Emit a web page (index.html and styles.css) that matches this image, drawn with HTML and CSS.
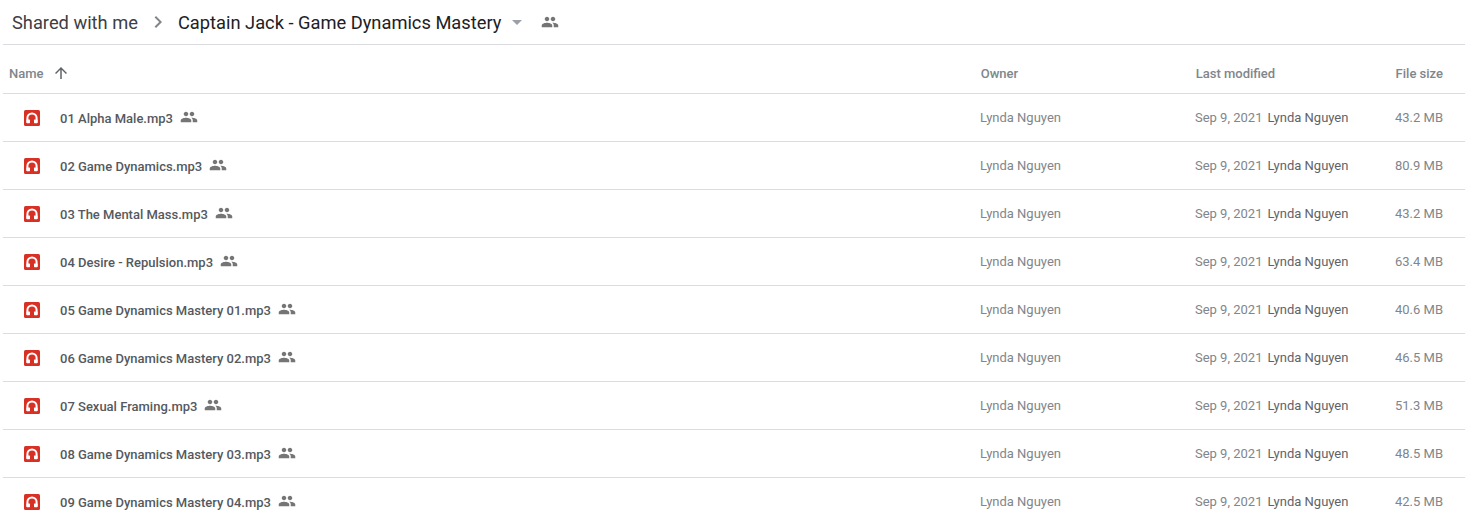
FILE: index.html
```html
<!DOCTYPE html>
<html lang="en">
<head>
  <meta charset="UTF-8" />
  <title>Captain Jack - Game Dynamics Mastery</title>
  <link rel="stylesheet" href="styles.css">
</head>
<body>
  <svg class="defs" width="0" height="0">
    <symbol id="people" viewBox="0 0 24 24">
      <path d="M16 11c1.66 0 2.99-1.34 2.99-3S17.66 5 16 5c-1.66 0-3 1.34-3 3s1.34 3 3 3zm-8 0c1.66 0 2.99-1.34 2.99-3S9.66 5 8 5C6.34 5 5 6.34 5 8s1.34 3 3 3zm0 2c-2.33 0-7 1.17-7 3.5V19h14v-2.500c0-2.330-4.670-3.500-7-3.500zm8 0c-.29 0-.62.02-.97.05 1.160.84 1.970 1.970 1.970 3.450V19h6v-2.500c0-2.330-4.670-3.500-7-3.500z"/>
    </symbol>
    <symbol id="audio" viewBox="0 0 16 16">
      <rect width="16" height="16" rx="1.500" fill="#d93025"/>
      <path d="M3.400 12.500V8a4.600 4.600 0 0 1 9.200 0v4.500" fill="none" stroke="#fff" stroke-width="2"/>
      <rect x="2.400" y="9.500" width="3.600" height="3.700" rx=".6" fill="#fff"/>
      <rect x="10" y="9.500" width="3.600" height="3.700" rx=".6" fill="#fff"/>
    </symbol>
  </svg>

  <header class="crumbs">
    <span class="crumb">Shared with me</span>
    <svg class="chevron" viewBox="0 0 24 24"><path d="M8.590 16.590 13.170 12 8.590 7.410 10 6l6 6-6 6z"/></svg>
    <span class="crumb current">Captain Jack - Game Dynamics Mastery</span>
    <span class="caret"></span>
    <svg class="people crumb-people"><use href="#people"/></svg>
  </header>

  <div class="row head">
    <div class="name-head">Name
      <svg class="arrow" viewBox="0 0 24 24"><path d="M4 12l1.410 1.410L11 7.830V20h2V7.830l5.580 5.590L20 12l-8-8z"/></svg>
    </div>
    <div class="owner-head">Owner</div>
    <div class="mod-head">Last modified</div>
    <div class="size">File size</div>
  </div>

  <div id="files"></div>

  <script>
    const files = [
      ["01 Alpha Male.mp3", "43.2 MB"],
      ["02 Game Dynamics.mp3", "80.9 MB"],
      ["03 The Mental Mass.mp3", "43.2 MB"],
      ["04 Desire - Repulsion.mp3", "63.4 MB"],
      ["05 Game Dynamics Mastery 01.mp3", "40.6 MB"],
      ["06 Game Dynamics Mastery 02.mp3", "46.5 MB"],
      ["07 Sexual Framing.mp3", "51.3 MB"],
      ["08 Game Dynamics Mastery 03.mp3", "48.5 MB"],
      ["09 Game Dynamics Mastery 04.mp3", "42.5 MB"]
    ];

    document.getElementById("files").innerHTML = files.map(f => `
      <div class="row file">
        <div class="name">
          <svg class="audio"><use href="#audio"/></svg>
          <span class="title">${f[0]}</span>
          <svg class="people"><use href="#people"/></svg>
        </div>
        <div class="owner">Lynda Nguyen</div>
        <div class="mod"><span class="date">Sep 9, 2021</span><span class="by">Lynda Nguyen</span></div>
        <div class="size">${f[1]}</div>
      </div>`).join("");
  </script>
</body>
</html>
```

FILE: styles.css
```css
html, body {
  height: 521px;
  overflow: hidden;
}
body {
  margin: 0;
  padding-left: 3px;
  background: #fff;
  font-family: Roboto, Arial, sans-serif;
  font-size: 13px;
  color: #5f6368;
}
.defs {
  position: absolute;
}
.crumbs {
  display: flex;
  align-items: center;
  height: 44px;
  padding-left: 9px;
  border-bottom: 1px solid #dadce0;
  font-size: 18.300px;
}
.crumb {
  color: #3c4043;
}
.crumb.current {
  color: #202124;
}
.chevron {
  width: 24px;
  height: 24px;
  margin: 0 8px;
  fill: #80868b;
}
.caret {
  width: 0;
  height: 0;
  margin-left: 11px;
  border-left: 5px solid transparent;
  border-right: 5px solid transparent;
  border-top: 5px solid #9aa0a6;
}
.people {
  width: 18px;
  height: 18px;
  margin-top: -2px;
  fill: #757575;
}
.crumb-people {
  margin-top: 0;
  margin-left: 19px;
}
.row {
  display: flex;
  align-items: center;
  padding-right: 22px;
  border-bottom: 1px solid #dadce0;
}
.head {
  height: 40px;
  padding-top: 8px;
  font-weight: 500;
  color: #80868b;
}
.file {
  height: 47px;
}
.name-head {
  display: flex;
  align-items: center;
  width: 978px;
  padding-left: 6px;
  box-sizing: border-box;
}
.arrow {
  width: 18px;
  height: 18px;
  margin-left: 8px;
  fill: #5f6368;
}
.owner-head {
  width: 215px;
}
.mod-head {
  width: 200px;
}
.name {
  display: flex;
  align-items: center;
  width: 977px;
  padding-left: 21px;
  box-sizing: border-box;
}
.audio {
  width: 16px;
  height: 16px;
  margin-right: 20px;
}
.title {
  padding-top: 1px;
  color: #55595e;
  font-weight: 500;
  margin-right: 7px;
}
.owner {
  width: 215px;
  color: #80868b;
}
.mod {
  width: 200px;
  white-space: nowrap;
}
.date {
  color: #80868b;
  margin-right: 5px;
}
.by {
  color: #5f6368;
}
.size {
  flex: 1;
  text-align: right;
  white-space: nowrap;
  color: #80868b;
}
```
